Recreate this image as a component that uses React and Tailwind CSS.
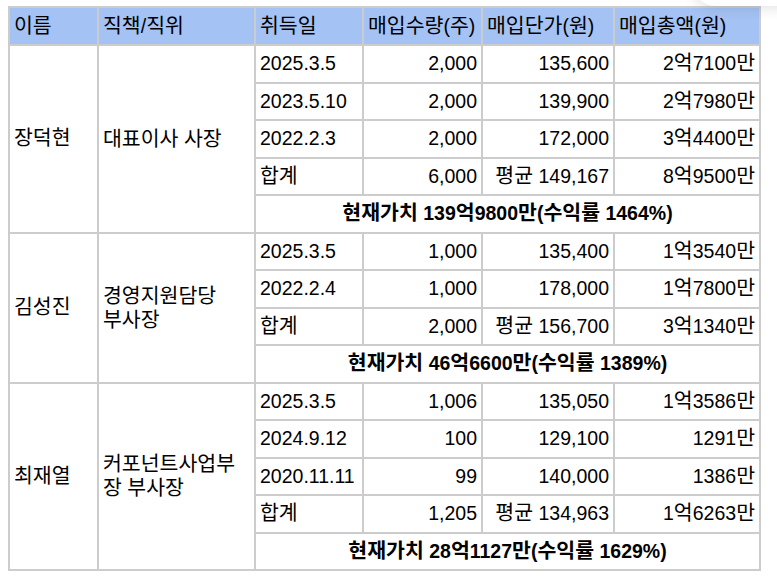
import React from "react";

const groups = [
  {
    name: "장덕현",
    title: ["대표이사 사장"],
    rows: [
      ["2025.3.5", "2,000", "135,600", "2억7100만"],
      ["2023.5.10", "2,000", "139,900", "2억7980만"],
      ["2022.2.3", "2,000", "172,000", "3억4400만"],
      ["합계", "6,000", "평균 149,167", "8억9500만"],
    ],
    value: "현재가치 139억9800만(수익률 1464%)",
  },
  {
    name: "김성진",
    title: ["경영지원담당", "부사장"],
    rows: [
      ["2025.3.5", "1,000", "135,400", "1억3540만"],
      ["2022.2.4", "1,000", "178,000", "1억7800만"],
      ["합계", "2,000", "평균 156,700", "3억1340만"],
    ],
    value: "현재가치 46억6600만(수익률 1389%)",
  },
  {
    name: "최재열",
    title: ["커포넌트사업부", "장 부사장"],
    rows: [
      ["2025.3.5", "1,006", "135,050", "1억3586만"],
      ["2024.9.12", "100", "129,100", "1291만"],
      ["2020.11.11", "99", "140,000", "1386만"],
      ["합계", "1,205", "평균 134,963", "1억6263만"],
    ],
    value: "현재가치 28억1127만(수익률 1629%)",
  },
];

function K({ text }) {
  const parts = text.split(/([\uAC00-\uD7A3]+)/);
  return (
    <>
      {parts.map((p, i) =>
        /[\uAC00-\uD7A3]/.test(p) ? (
          <span key={i} className="text-[20.5px] leading-none">
            {p}
          </span>
        ) : (
          <React.Fragment key={i}>{p}</React.Fragment>
        )
      )}
    </>
  );
}

const cell = "border-r-2 border-b-2 border-[#cccccc] px-[4px] py-[6px] leading-[23.5px]";

export default function App() {
  return (
    <div
      className="relative w-[777px] h-[586px] overflow-hidden bg-white text-black text-[19.5px]"
      style={{ fontFamily: '"Liberation Sans", "Noto Sans CJK KR", sans-serif' }}
    >
      <div className="absolute right-[-24px] top-[-44px] w-[110px] h-[50px] rounded-full bg-white shadow-[0_2px_14px_rgba(0,0,0,0.12)]" />
      <div className="pt-[6px] pl-[8px]">
        <table className="table-fixed border-separate border-spacing-0 border-l-2 border-t-2 border-[#cccccc] w-[753px]">
          <colgroup>
            <col className="w-[89px]" />
            <col className="w-[157px]" />
            <col className="w-[108px]" />
            <col className="w-[119px]" />
            <col className="w-[132px]" />
            <col className="w-[146px]" />
          </colgroup>
          <thead>
            <tr className="bg-[#a4c2f4]">
              {["이름", "직책/직위", "취득일", "매입수량(주)", "매입단가(원)", "매입총액(원)"].map((h) => (
                <th key={h} className={`${cell} font-normal text-left leading-[24px] whitespace-nowrap`}>
                  <K text={h} />
                </th>
              ))}
            </tr>
          </thead>
          <tbody>
            {groups.map((g) => (
              <React.Fragment key={g.name}>
                {g.rows.map((r, i) => (
                  <tr key={i}>
                    {i === 0 && (
                      <>
                        <td rowSpan={g.rows.length + 1} className={`${cell} align-middle whitespace-nowrap`}>
                          <K text={g.name} />
                        </td>
                        <td rowSpan={g.rows.length + 1} className={`${cell} align-middle leading-[24px] whitespace-nowrap`}>
                          {g.title.map((t, k) => (
                            <div key={k}>
                              <K text={t} />
                            </div>
                          ))}
                        </td>
                      </>
                    )}
                    <td className={`${cell} text-left whitespace-nowrap`}>
                      <K text={r[0]} />
                    </td>
                    <td className={`${cell} text-right whitespace-nowrap`}>{r[1]}</td>
                    <td className={`${cell} text-right whitespace-nowrap`}>
                      <K text={r[2]} />
                    </td>
                    <td className={`${cell} text-right whitespace-nowrap`}>
                      <K text={r[3]} />
                    </td>
                  </tr>
                ))}
                <tr>
                  <td colSpan={4} className={`${cell} text-center font-bold whitespace-nowrap`}>
                    <K text={g.value} />
                  </td>
                </tr>
              </React.Fragment>
            ))}
          </tbody>
        </table>
      </div>
    </div>
  );
}
